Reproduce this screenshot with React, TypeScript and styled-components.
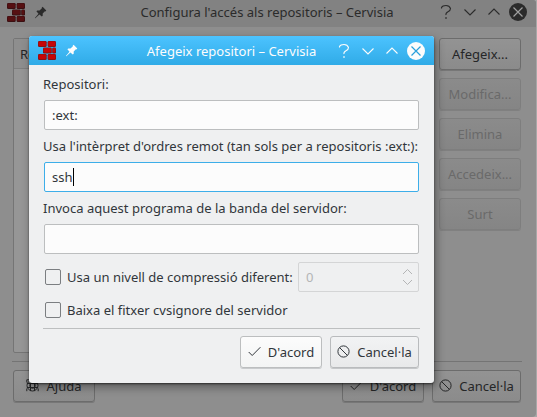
import React from 'react';
import styled, { createGlobalStyle, css } from 'styled-components';

const GlobalStyle = createGlobalStyle`
  * { box-sizing: border-box; }
  body {
    margin: 0;
    background: #a8a8a8;
    overflow: hidden;
    font: 13.02px/18px "Noto Sans", sans-serif;
    color: #31363b;
  }
`;

const Desktop = styled.main`
  position: relative;
  width: 537px;
  height: 417px;
  overflow: hidden;
`;

const ParentWindow = styled.section`
  display: flex;
  flex-direction: column;
  width: 536px;
  height: 417px;
  background: #8e8e8e;
  border-radius: 0 3px 4px 0;
  color: #252627;
  overflow: hidden;
`;

const TitleBar = styled.header<{ $active?: boolean }>`
  display: flex;
  align-items: center;
  flex: none;
  height: ${p => (p.$active ? 29 : 27)}px;
  padding: ${p => (p.$active ? '0 9px' : '0 9px 3px 7px')};
  color: ${p => (p.$active ? '#fcfcfc' : '#2b2b2b')};
  background: ${p => (p.$active ? 'linear-gradient(#4cc3ff, #30abe7)' : '#828282')};
  border-radius: ${p => (p.$active ? '3px 3px 0 0' : '0')};
`;

const Title = styled.h1`
  flex: 1;
  margin: 0;
  padding-left: 50px;
  text-align: center;
  font-size: 13.02px;
  font-weight: 400;
  line-height: 18px;
  white-space: nowrap;
`;

const AppIcon = styled.svg`
  width: 18px;
  height: 19px;
  margin-right: 9px;
  flex: none;
`;

const PinIcon = styled.svg`
  width: 13px;
  height: 13px;
  flex: none;
`;

const WindowControls = styled.div`
  display: flex;
  gap: 6px;
  svg { display: block; width: 18px; height: 18px; }
`;

const ParentBody = styled.div`
  display: grid;
  grid-template-columns: 1fr 82px;
  column-gap: 8px;
  height: 334px;
  padding: 11px 15px 0 13px;
`;

const RepositoryList = styled.div`
  height: 315px;
  border: 1px solid #757575;
  border-radius: 2px;
  background: #969696;
`;

const ListHeader = styled.div`
  height: 30px;
  padding: 6px;
  border-bottom: 1px solid #7e7e7e;
  background: #8e8e8e;
`;

const ButtonColumn = styled.div`
  display: flex;
  flex-direction: column;
  gap: 8px;
`;

const Button = styled.button<{ $tone: 'light' | 'focus' | 'dim' | 'off'; $width?: number }>`
  display: flex;
  align-items: center;
  justify-content: center;
  gap: 7px;
  flex: none;
  width: ${p => p.$width ?? 82}px;
  height: 32px;
  padding: 0 0 1px;
  font: inherit;
  color: inherit;
  white-space: nowrap;
  border-radius: 3px;
  svg { width: 13px; height: 13px; flex: none; }
  ${p => {
    switch (p.$tone) {
      case 'focus':
        return css`background: linear-gradient(#fcfcfc, #f3f4f4); border: 1px solid #bcbebf; box-shadow: 0 1px #c9cbcd;`;
      case 'light':
        return css`background: linear-gradient(#f2f3f4, #e8e9ea); border: 1px solid #b9bbbd; box-shadow: 0 1px #c5c7c9;`;
      case 'dim':
        return css`background: linear-gradient(#939393, #8b8b8b); border: 1px solid #6c6c6c; box-shadow: 0 1px #777;`;
      default:
        return css`background: linear-gradient(#8b8b8b, #858585); border: 1px solid #7e7e7e; box-shadow: 0 1px #808080; color: #6a6a6a;`;
    }
  }}
`;

const ParentFooter = styled.footer`
  display: flex;
  gap: 8px;
  margin: 0 14px 0 12px;
  padding: 8px 1px 0;
  border-top: 1px solid #747474;
`;

const Spacer = styled.span`
  flex: 1;
`;

const Dialog = styled.section`
  position: absolute;
  left: 29px;
  top: 36px;
  width: 405px;
  height: 347px;
  border-radius: 3px;
  background: #eff0f1;
  box-shadow: 0 1px 2px rgba(0, 0, 0, .55), 2px 4px 10px rgba(0, 0, 0, .38);
`;

const Form = styled.form`
  display: flex;
  flex-direction: column;
  padding: 10px 14px 0;
`;

const Field = styled.label`
  display: block;
  height: 62px;
  white-space: nowrap;
`;

const TextBox = styled.span<{ $focused?: boolean }>`
  display: flex;
  align-items: center;
  height: 30px;
  margin: 7px 1px 0;
  padding: 0 8px 1px 7px;
  border: 1px solid ${p => (p.$focused ? '#3daee9' : '#bcbebf')};
  border-radius: 2px;
  background: #fcfcfc;
`;

const Caret = styled.i`
  width: 1px;
  height: 18px;
  background: #000;
`;

const OptionRow = styled.div<{ $height: number }>`
  display: flex;
  align-items: center;
  height: ${p => p.$height}px;
  padding: 0 1px;
  white-space: nowrap;
`;

const CheckBox = styled.span`
  width: 16px;
  height: 16px;
  margin: 0 6px 0 1px;
  border: 1px solid #7b7e81;
  border-radius: 2px;
`;

const SpinBox = styled.span`
  display: flex;
  align-items: center;
  justify-content: space-between;
  width: 121px;
  height: 30px;
  margin-left: auto;
  padding: 0 5px 0 7px;
  border: 1px solid #d4d5d6;
  border-radius: 2px;
  color: #b4b5b6;
  svg { width: 11px; height: 18px; }
`;

const DialogFooter = styled.footer`
  display: flex;
  justify-content: flex-end;
  gap: 8px;
  margin-top: 1px;
  padding: 7px 1px 0;
  border-top: 1px solid #bdbfc0;
`;

function Bricks({ dark }: { dark?: boolean }) {
  const rects = [[0, 0, 8.7, 6], [9.6, 0, 8.4, 6], [5, 6.5, 8.8, 6], [14.2, 6.5, 3.8, 6], [0, 13, 8.7, 6], [9.6, 13, 8.4, 6]];
  return (
    <AppIcon viewBox="0 0 18 19">
      {rects.map(([x, y, w, h]) => (
        <g key={`${x}-${y}`}>
          <rect x={x} y={y} width={w} height={h} rx="1.3" fill={dark ? '#3a1012' : '#851416'} />
          <rect x={x + 0.6} y={y + 0.5} width={w - 1.4} height={h - 1.5} rx=".8" fill={dark ? '#561012' : '#c60507'} />
        </g>
      ))}
    </AppIcon>
  );
}

function Pin() {
  return (
    <PinIcon viewBox="0 0 13 13" fill="currentColor">
      <path d="M8.6.8 12.3 4.5 11.4 5.4 10.9 5.2 8.7 7.6 8.7 9.7 7.8 10.6 5.4 8.5 1.3 12.3.9 11.9 4.5 7.7 2.4 5.3 3.3 4.4 5.5 4.4 7.9 2.2 7.7 1.7Z" />
    </PinIcon>
  );
}

function Controls({ cross }: { cross: string }) {
  return (
    <WindowControls>
      <svg viewBox="0 0 18 18" fill="none" stroke="currentColor" strokeWidth="1.1">
        <path d="M4.5 5.5V4.5Q5.5 2.5 9 2.5T13.5 5.5Q13.5 7.5 11 8.7T9 12M9 14v2" />
      </svg>
      <svg viewBox="0 0 18 18" fill="none" stroke="currentColor" strokeWidth="1.1"><path d="m3.5 6.5 5.5 5.5 5.5-5.5" /></svg>
      <svg viewBox="0 0 18 18" fill="none" stroke="currentColor" strokeWidth="1.1"><path d="m3.5 11.5 5.5-5.5 5.5 5.5" /></svg>
      <svg viewBox="0 0 18 18">
        <circle cx="9" cy="9" r="9" fill="currentColor" />
        <path d="m4.5 4.5 9 9m0-9-9 9" fill="none" stroke={cross} strokeWidth="1.2" />
      </svg>
    </WindowControls>
  );
}

function Check() {
  return <svg viewBox="0 0 13 13" fill="none" stroke="currentColor" strokeWidth="1"><path d="m.7 7 3.5 3.5 8.2-8.3" /></svg>;
}

function Forbidden() {
  return (
    <svg viewBox="0 0 13 13" fill="none" stroke="currentColor" strokeWidth="1">
      <circle cx="6.5" cy="6.5" r="5.6" /><path d="m2.6 2.6 7.8 7.8" />
    </svg>
  );
}

function Help() {
  return (
    <svg viewBox="0 0 13 13" fill="none" stroke="currentColor" strokeWidth="1">
      <circle cx="6.5" cy="6.5" r="5.5" /><circle cx="6.5" cy="6.5" r="2.8" />
      <path d="M.8 3.5V.8H3.5M9.5.8h2.7v2.7M.8 9.5v2.7M12.2 12.2V9.5M4.5 1v11M8.5 1v11M1 4.5h11M1 8.5h11" />
    </svg>
  );
}

const sideActions = ['Modifica...', 'Elimina', 'Accedeix...', 'Surt'];

export default function App() {
  return (
    <>
      <GlobalStyle />
      <Desktop>
        <ParentWindow>
          <TitleBar>
            <Bricks dark /><Pin />
            <Title>Configura l'accés als repositoris – Cervisia</Title>
            <Controls cross="#a0a0a0" />
          </TitleBar>
          <ParentBody>
            <RepositoryList><ListHeader>Repositori</ListHeader></RepositoryList>
            <ButtonColumn>
              <Button $tone="dim">Afegeix...</Button>
              {sideActions.map(label => <Button key={label} $tone="off" disabled>{label}</Button>)}
            </ButtonColumn>
          </ParentBody>
          <ParentFooter>
            <Button $tone="dim"><Help />Ajuda</Button>
            <Spacer />
            <Button $tone="dim"><Check />D'acord</Button>
            <Button $tone="dim" $width={89}><Forbidden />Cancel·la</Button>
          </ParentFooter>
        </ParentWindow>
        <Dialog role="dialog">
          <TitleBar $active>
            <Bricks /><Pin />
            <Title>Afegeix repositori – Cervisia</Title>
            <Controls cross="#2aa0dc" />
          </TitleBar>
          <Form>
            <Field>Repositori:<TextBox>:ext:</TextBox></Field>
            <Field>Usa l'intèrpret d'ordres remot (tan sols per a repositoris :ext:):<TextBox $focused>ssh<Caret /></TextBox></Field>
            <Field>Invoca aquest programa de la banda del servidor:<TextBox /></Field>
            <OptionRow $height={32}>
              <CheckBox />Usa un nivell de compressió diferent:
              <SpinBox>0
                <svg viewBox="0 0 11 18" fill="none" stroke="currentColor"><path d="m1 6 4.5-4.5L10 6M1 12l4.5 4.5L10 12" /></svg>
              </SpinBox>
            </OptionRow>
            <OptionRow $height={34}><CheckBox />Baixa el fitxer cvsignore del servidor</OptionRow>
            <DialogFooter>
              <Button type="button" $tone="focus"><Check />D'acord</Button>
              <Button type="button" $tone="light" $width={89}><Forbidden />Cancel·la</Button>
            </DialogFooter>
          </Form>
        </Dialog>
      </Desktop>
    </>
  );
}
